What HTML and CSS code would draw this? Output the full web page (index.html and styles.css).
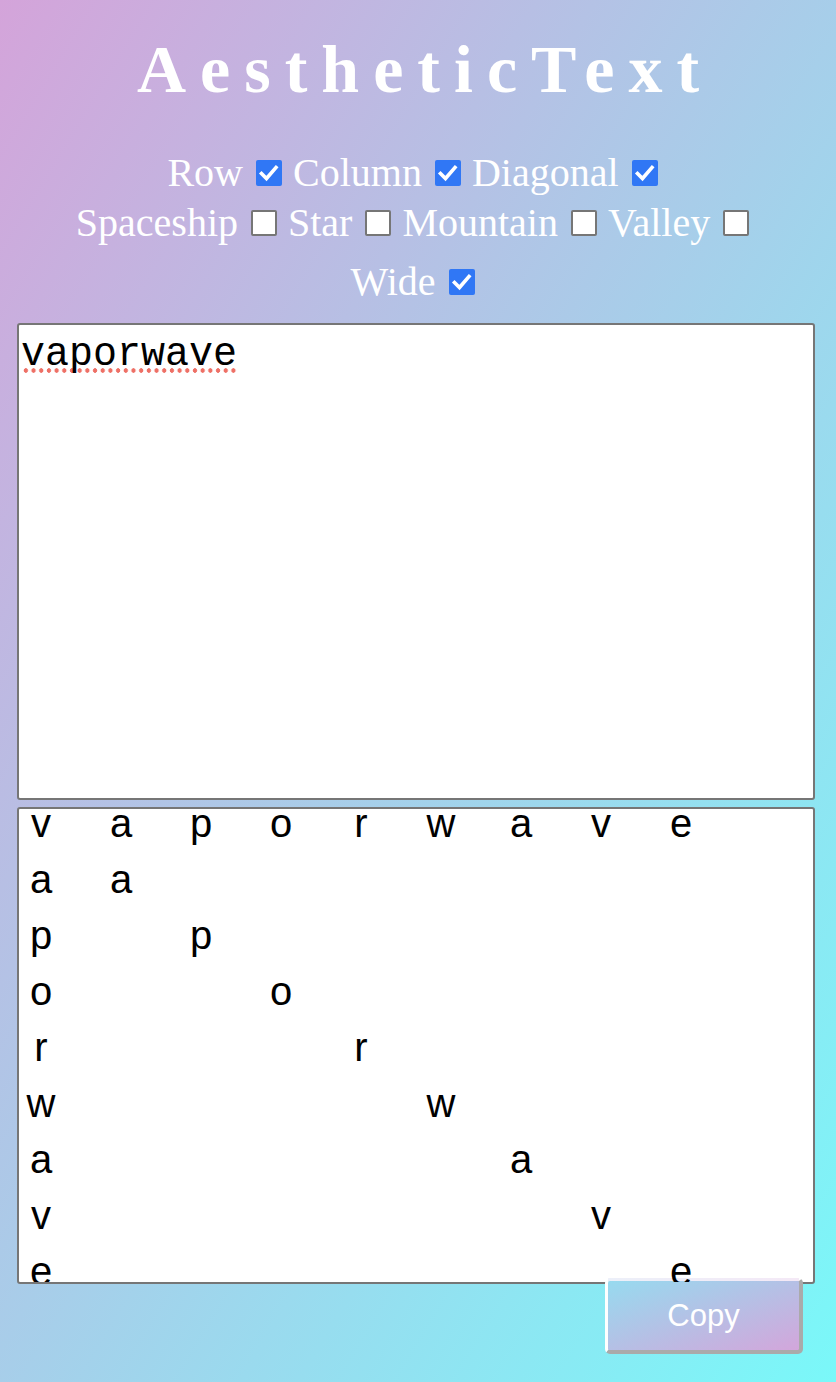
FILE: index.html
```html
<!DOCTYPE html>
<html lang="en">
<head>
<meta charset="utf-8">
<title>AestheticText</title>
<link rel="stylesheet" href="styles.css">
</head>
<body>
<h1 class="title">AestheticText</h1>
<div class="options">
  <div class="opt-row">Row<span class="box checked"><svg viewBox="0 0 26 26"><path d="M5.5 13.5 L10.5 18.5 L20 7.5"/></svg></span>Column<span class="box checked"><svg viewBox="0 0 26 26"><path d="M5.5 13.5 L10.5 18.5 L20 7.5"/></svg></span>Diagonal<span class="box checked"><svg viewBox="0 0 26 26"><path d="M5.5 13.5 L10.5 18.5 L20 7.5"/></svg></span></div>
  <div class="opt-row">Spaceship<span class="box"></span>Star<span class="box"></span>Mountain<span class="box"></span>Valley<span class="box"></span></div>
  <div class="opt-row wide-row">Wide<span class="box checked"><svg viewBox="0 0 26 26"><path d="M5.5 13.5 L10.5 18.5 L20 7.5"/></svg></span></div>
</div>
<div class="input"><span class="misspelled">vaporwave</span></div>
<div class="output">
  <div class="row"><span>v</span><span>a</span><span>p</span><span>o</span><span>r</span><span>w</span><span>a</span><span>v</span><span>e</span></div>
  <div class="row"><span>a</span><span>a</span></div>
  <div class="row"><span>p</span><span></span><span>p</span></div>
  <div class="row"><span>o</span><span></span><span></span><span>o</span></div>
  <div class="row"><span>r</span><span></span><span></span><span></span><span>r</span></div>
  <div class="row"><span>w</span><span></span><span></span><span></span><span></span><span>w</span></div>
  <div class="row"><span>a</span><span></span><span></span><span></span><span></span><span></span><span>a</span></div>
  <div class="row"><span>v</span><span></span><span></span><span></span><span></span><span></span><span></span><span>v</span></div>
  <div class="row"><span>e</span><span></span><span></span><span></span><span></span><span></span><span></span><span></span><span>e</span></div>
</div>
<button class="copy">Copy</button>
</body>
</html>
```
FILE: styles.css
```css
html {
  height: 100%;
  background: linear-gradient(to bottom right, #d4a4da, #7af8f9);
}

body {
  margin: 0;
  font-family: "Liberation Serif", "Times New Roman", serif;
  color: #fff;
}

.title {
  margin: 0;
  padding: 32px 0 0 14px;
  font-size: 68px;
  line-height: 74px;
  font-weight: bold;
  letter-spacing: 14px;
  text-align: center;
  color: #fff;
}

.options {
  margin-top: 42px;
  font-size: 40px;
  text-align: center;
}

.opt-row {
  line-height: 50px;
  white-space: nowrap;
}

.wide-row {
  margin-top: 9px;
}

.box {
  display: inline-block;
  box-sizing: border-box;
  width: 26px;
  height: 26px;
  margin: 0 11px 0 13px;
  background: #fff;
  border: 2px solid #767676;
  border-radius: 2px;
  vertical-align: baseline;
}

.box.checked {
  background: #3077f5;
  border: none;
}

.box svg {
  display: block;
  width: 26px;
  height: 26px;
}

.box svg path {
  fill: none;
  stroke: #fff;
  stroke-width: 3.6;
  stroke-linecap: square;
  stroke-linejoin: miter;
}

.input {
  box-sizing: border-box;
  width: 798px;
  height: 477px;
  margin: 16px 0 0 17px;
  padding: 7px 2px;
  background: #fff;
  border: 2px solid #767676;
  border-radius: 3px;
  font-family: "Liberation Mono", "Courier New", monospace;
  font-size: 40px;
  color: #000;
}

.misspelled {
  background-image: radial-gradient(circle at center, #ee7066 2px, rgba(238, 112, 102, 0) 2.5px);
  background-size: 7.7px 5px;
  background-repeat: repeat-x;
  background-position: 1px calc(100% - 4px);
}

.output {
  box-sizing: border-box;
  width: 798px;
  height: 477px;
  margin: 7px 0 0 17px;
  padding: 0 2px;
  background: #fff;
  border: 2px solid #767676;
  border-radius: 3px;
  overflow: hidden;
  font-family: "Liberation Sans", Arial, sans-serif;
  font-size: 40px;
  line-height: 56px;
  color: #000;
}

.row {
  display: grid;
  grid-template-columns: repeat(9, 40px);
  column-gap: 40px;
}

.row:first-child {
  margin-top: -14px;
}

.row span {
  text-align: center;
}

.copy {
  float: right;
  box-sizing: border-box;
  width: 198px;
  height: 76px;
  margin: -6px 33px 0 0;
  padding: 0;
  border-style: solid;
  border-width: 3px 4px 4px 3px;
  border-color: rgba(255, 255, 255, 0.75) #aaaaaa #aaaaaa #ffffff;
  border-radius: 5px;
  background: linear-gradient(to bottom right, #97daef, #d3a6db);
  font-family: "Liberation Sans", Arial, sans-serif;
  font-size: 31px;
  color: #fff;
}
```
